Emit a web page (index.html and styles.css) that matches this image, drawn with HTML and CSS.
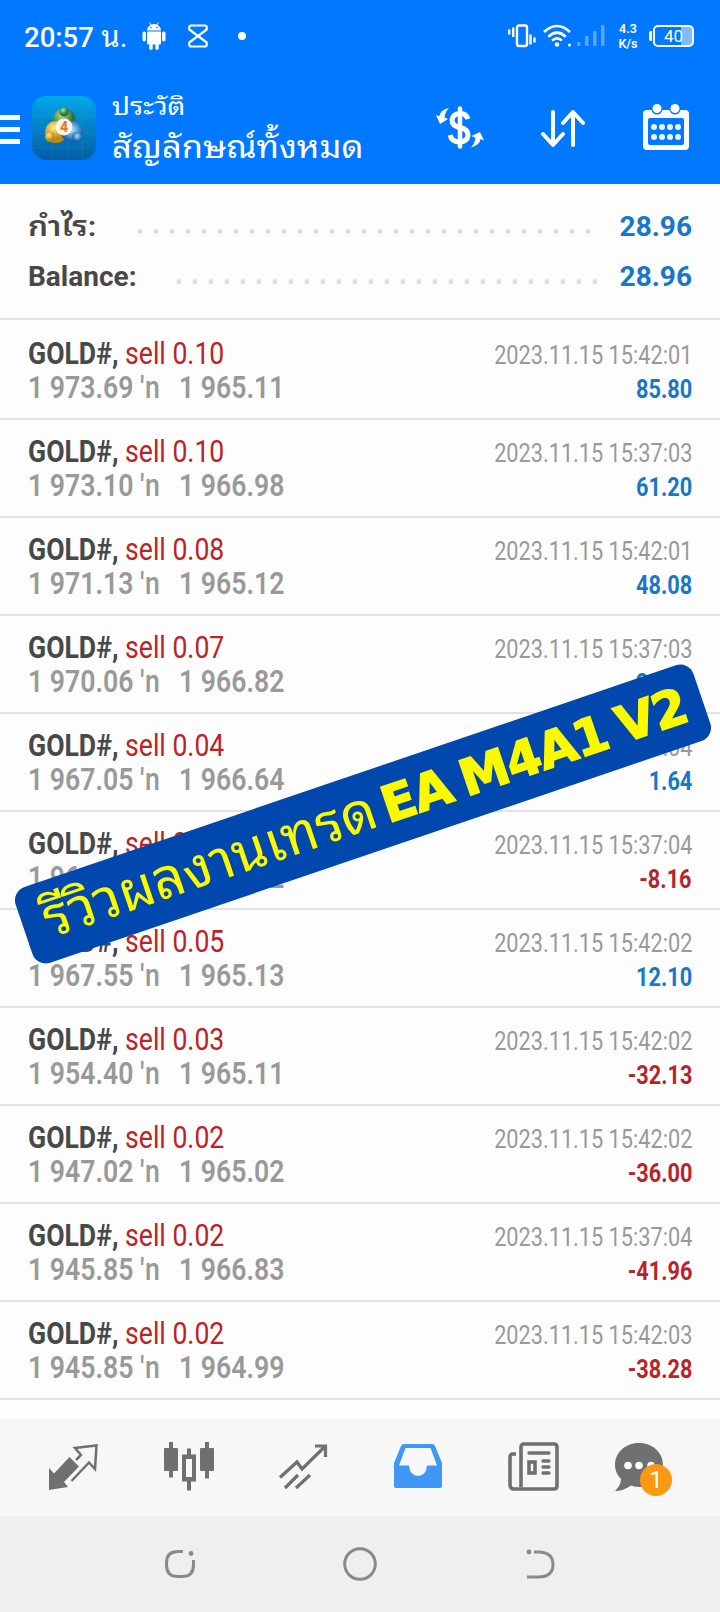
FILE: index.html
```html
<!DOCTYPE html>
<html lang="th">
<head>
    <meta charset="UTF-8">
    <meta name="viewport" content="width=device-width, initial-scale=1.0">
    <title>ประวัติ</title>
    <link rel="stylesheet" href="styles.css">
</head>
<body>

    <header>
        <div class="status-bar">
            <div class="clock">20:57 <span>น.</span></div>
            <svg class="android" width="24" height="28" viewBox="0 0 24 28" fill="#fff">
                <path d="M5 8.500a7 6.500 0 0 1 14 0z"/>
                <path d="M7.500 0.500l2 3M16.500 0.500l-2 3" stroke="#fff"/>
                <circle cx="9" cy="5.500" r=".8" fill="#0078ff"/>
                <circle cx="15" cy="5.500" r=".8" fill="#0078ff"/>
                <path d="M5 9.500h14v11.500a1.500 1.500 0 0 1-1.500 1.500h-11a1.500 1.500 0 0 1-1.500-1.500z"/>
                <rect x="0.500" y="9.500" width="3.400" height="10" rx="1.700"/>
                <rect x="20.100" y="9.500" width="3.400" height="10" rx="1.700"/>
                <rect x="7.300" y="19" width="3.400" height="9" rx="1.700"/>
                <rect x="13.300" y="19" width="3.400" height="9" rx="1.700"/>
            </svg>
            <svg class="hourglass" width="20" height="24" viewBox="0 0 20 24" fill="none" stroke="#fff" stroke-width="2.200" stroke-linejoin="round">
                <path d="M3 1.500h14q1.700 0 1.700 1.700v2.300L10 12L1.300 5.500V3.200q0-1.700 1.700-1.700zM10 12l8.700 6.500v2.300q0 1.700-1.700 1.700H3q-1.700 0-1.700-1.700v-2.300z"/>
            </svg>
            <span class="dot"></span>
            <svg class="vibrate" width="28" height="24" viewBox="0 0 28 24" fill="none" stroke="#fff" stroke-width="2.400">
                <rect x="9" y="1.500" width="10" height="20.500" rx="2"/>
                <path d="M1.200 5.500v5M5.200 3.500v9.500M22.500 10.500v10M26.500 13.500v5"/>
            </svg>
            <svg class="wifi" width="30" height="24" viewBox="0 0 30 24" fill="none" stroke="#fff" stroke-width="2.600">
                <path d="M1 8q13-12 26 0M5.300 12.700q8.700-8 17.400 0M9 16.600q5-4.500 10 0"/>
                <circle cx="14" cy="20.500" r="2.200" fill="#fff" stroke="none"/>
                <circle cx="26.500" cy="21" r="1.500" fill="#fff" stroke="none"/>
            </svg>
            <svg class="signal" width="30" height="22" viewBox="0 0 30 22" fill="#fff" opacity=".35">
                <rect x="1" y="17" width="3.500" height="4" rx="1"/>
                <rect x="9" y="11" width="3.500" height="10" rx="1"/>
                <rect x="17" y="6" width="3.500" height="15" rx="1"/>
                <rect x="25" y="0" width="3.500" height="21" rx="1"/>
            </svg>
            <div class="speed">4.3<br>K/s</div>
            <div class="battery"><span>40</span></div>
        </div>

        <div class="app-bar">
            <div class="menu"><i></i><i></i><i></i></div>
            <svg class="logo" width="64" height="64" viewBox="0 0 64 64">
                <defs>
                    <linearGradient id="sky" x1="0" y1="0" x2="0" y2="1">
                        <stop offset="0" stop-color="#00a9ea"/>
                        <stop offset=".5" stop-color="#0580c4"/>
                        <stop offset="1" stop-color="#035ea5"/>
                    </linearGradient>
                    <radialGradient id="green" cx=".4" cy=".3"><stop offset="0" stop-color="#b7e08d"/><stop offset="1" stop-color="#23743f"/></radialGradient>
                    <radialGradient id="gold" cx=".4" cy=".3"><stop offset="0" stop-color="#fff08a"/><stop offset="1" stop-color="#c18a12"/></radialGradient>
                    <radialGradient id="blue" cx=".5" cy=".4"><stop offset="0" stop-color="#a5ddff"/><stop offset="1" stop-color="#1466ab"/></radialGradient>
                </defs>
                <rect width="64" height="64" rx="14" fill="url(#sky)"/>
                <path d="M20 0v64M36 0v64M50 0v64M0 20h64M0 38h64M0 52h64" stroke="#5cc8ff" stroke-width=".6" opacity=".2"/>
                <circle cx="32" cy="24" r="11.500" fill="url(#green)"/>
                <circle cx="32" cy="16" r="4.500" fill="url(#green)"/>
                <circle cx="24" cy="36" r="11" fill="url(#gold)"/>
                <circle cx="18" cy="41" r="5" fill="url(#gold)"/>
                <circle cx="40" cy="36" r="11" fill="url(#blue)"/>
                <circle cx="45" cy="41" r="5" fill="url(#blue)"/>
                <circle cx="32" cy="31" r="8.500" fill="#fff3e4"/>
                <text x="32" y="36" text-anchor="middle" class="logo-text">4</text>
            </svg>
            <div class="titles">
                <div class="subtitle"><span>ประวัติ</span></div>
                <h1><span>สัญลักษณ์ทั้งหมด</span></h1>
            </div>
            <svg class="currency" width="50" height="44" viewBox="0 0 50 44" fill="none" stroke="#fff">
                <path d="M33 13Q31 7 24.500 7.500T17 14Q17 20 25 21.500T33 29.500Q32 36 24.500 36T15 29" stroke-width="5"/>
                <path d="M25 2.500v38" stroke-width="4.500" stroke-linecap="round"/>
                <path d="M14 2Q5 4 4.500 10L1 9L5 18L13 13L9.500 11.500Q10 6 14 2zM36 41.500Q45 39 45.500 33L49 34.500L45 26L36.500 30L40.500 32Q40 37 36 41.500z" fill="#fff" stroke="none"/>
            </svg>
            <svg class="sort" width="46" height="40" viewBox="0 0 46 40" fill="none" stroke="#fff" stroke-width="4" stroke-linecap="round" stroke-linejoin="round">
                <path d="M13 4v33M3 26l10 11l10-11M33 37V4M23 15L33 4l10 11"/>
            </svg>
            <svg class="calendar" width="46" height="46" viewBox="0 0 46 46" fill="#fff">
                <rect x="0" y="6" width="46" height="40" rx="4"/>
                <rect x="5" y="14" width="36" height="27" rx="2" fill="#0078ff"/>
                <circle cx="14" cy="5" r="5.600" fill="#0078ff"/>
                <circle cx="32" cy="5" r="5.600" fill="#0078ff"/>
                <circle cx="14" cy="4.500" r="4.500"/>
                <circle cx="32" cy="4.500" r="4.500"/>
                <g opacity=".92">
                    <circle cx="11" cy="23" r="3"/><circle cx="19" cy="23" r="3"/><circle cx="27" cy="23" r="3"/><circle cx="35" cy="23" r="3"/>
                    <circle cx="11" cy="33" r="3"/><circle cx="19" cy="33" r="3"/><circle cx="27" cy="33" r="3"/><circle cx="35" cy="33" r="3"/>
                </g>
            </svg>
        </div>
    </header>

    <main>
        <section class="summary">
            <div class="total profit-total"><b>กำไร:</b><i class="leader"></i><strong>28.96</strong></div>
            <div class="total balance-total"><b>Balance:</b><i class="leader"></i><strong>28.96</strong></div>
        </section>
        <div id="deals"></div>
    </main>

    <div class="banner"><span class="banner-thai">รีวิวผลงานเทรด</span><span class="banner-name">EA M4A1 V2</span></div>

    <nav class="tabs">
        <svg width="50" height="50" viewBox="0 0 50 50" fill="none" stroke="#707070" stroke-width="2.500">
            <path d="M0 24l5 5.500L20.500 13l9.500 9.500L15 38l4 5L0 46z" fill="#707070" stroke="none"/>
            <path d="M27 16l5-5l-6-7l21.500-2.500L46 25l-6-6.500L22.500 37"/>
        </svg>
        <svg width="50" height="50" viewBox="0 0 50 50" fill="#707070">
            <rect x="0" y="4" width="14" height="23" rx="1"/><rect x="5" y="-2" width="4" height="35.500"/>
            <rect x="36" y="4" width="14" height="23" rx="1"/><rect x="41" y="-2" width="4" height="36.500"/>
            <path d="M23 4.500h4v6h5v27h-5v9h-4v-9h-5v-27h5zM22 15v18h6V15z" fill-rule="evenodd"/>
        </svg>
        <svg width="50" height="50" viewBox="0 0 50 50" fill="none" stroke="#707070" stroke-width="3.200">
            <path d="M1 33.500L18 18l5 7L46 2.500M36 2h10.500v11M6 44l13-13M17 44l14-13"/>
        </svg>
        <svg width="50" height="50" viewBox="0 0 50 50">
            <path d="M10 0h28q2 0 3 2l7 17v23q0 2-2 2H2q-2 0-2-2V19L7 2q1-2 3-2zM11.500 4L5 21.500H14q1.500 0 1.500 2a8.500 8.500 0 0 0 17 0q0-2 1.500-2h9L36.500 4z" fill="#3f98f5" fill-rule="evenodd"/>
        </svg>
        <svg width="50" height="50" viewBox="0 0 50 50" fill="none" stroke="#707070" stroke-width="3.600">
            <path d="M12 43V3q0-3 3-3h30q3 0 3 3v39q0 3-3 3H5q-4 0-4-4V13q0-3 3-3h3"/>
            <path d="M20 9h20M34 17h6M34 23h6M34 29h6" stroke-linecap="round" stroke-width="3.300"/>
            <rect x="20" y="18" width="6" height="11"/>
        </svg>
        <div class="chat">
            <svg width="50" height="50" viewBox="0 0 50 50">
                <path d="M25-1C39-1 49 9 49 21S39 43 26 43q-5 0-9-1.500Q9 47 1 47q6-6 6-12Q1 29 1 21C1 9 11-1 25-1z" fill="#707070"/>
                <circle cx="14" cy="21.500" r="3.800" fill="#fff"/><circle cx="25" cy="21.500" r="3.800" fill="#fff"/><circle cx="37" cy="21.500" r="3.800" fill="#fff"/>
            </svg>
            <span class="badge">1</span>
        </div>
    </nav>

    <footer>
        <svg width="34" height="34" viewBox="0 0 34 34" fill="none" stroke="#8a8a8a" stroke-width="3">
            <path d="M20 4.500h-5Q3.500 4.500 3.500 16v2Q3.500 29.500 15 29.500h4Q30.500 29.500 30.500 18v-5"/>
            <circle cx="28" cy="6.500" r="2.400" fill="#8a8a8a" stroke="none"/>
        </svg>
        <svg width="34" height="34" viewBox="0 0 34 34" fill="none" stroke="#8a8a8a" stroke-width="3">
            <circle cx="17" cy="17" r="15.300"/>
        </svg>
        <svg width="34" height="34" viewBox="0 0 34 34" fill="none" stroke="#8a8a8a" stroke-width="3">
            <path d="M11 5h4q15 0 15 12.500T15 30H4"/>
            <circle cx="6" cy="5" r="2.400" fill="#8a8a8a" stroke="none"/>
        </svg>
    </footer>

    <script>
        const deals = [
            ['0.10', '1 973.69', '1 965.11', '2023.11.15 15:42:01', '85.80'],
            ['0.10', '1 973.10', '1 966.98', '2023.11.15 15:37:03', '61.20'],
            ['0.08', '1 971.13', '1 965.12', '2023.11.15 15:42:01', '48.08'],
            ['0.07', '1 970.06', '1 966.82', '2023.11.15 15:37:03', '22.68'],
            ['0.04', '1 967.05', '1 966.64', '2023.11.15 15:37:04', '1.64'],
            ['0.04', '1 964.78', '1 966.82', '2023.11.15 15:37:04', '-8.16'],
            ['0.05', '1 967.55', '1 965.13', '2023.11.15 15:42:02', '12.10'],
            ['0.03', '1 954.40', '1 965.11', '2023.11.15 15:42:02', '-32.13'],
            ['0.02', '1 947.02', '1 965.02', '2023.11.15 15:42:02', '-36.00'],
            ['0.02', '1 945.85', '1 966.83', '2023.11.15 15:37:04', '-41.96'],
            ['0.02', '1 945.85', '1 964.99', '2023.11.15 15:42:03', '-38.28']
        ];

        // One row per closed deal
        document.getElementById('deals').innerHTML = deals.map(([lot, open, close, time, profit]) => `
            <div class="deal">
                <div class="line">
                    <span class="symbol"><b>GOLD#,</b> <em>sell ${lot}</em></span>
                    <span class="time">${time}</span>
                </div>
                <div class="line">
                    <span class="prices">${open} <u>′n</u> &nbsp;${close}</span>
                    <span class="profit ${profit[0] === '-' ? 'loss' : ''}">${profit}</span>
                </div>
            </div>`).join('');
    </script>

</body>
</html>
```
FILE: styles.css
```css
* {
    box-sizing: border-box;
}

body {
    position: relative;
    display: flex;
    flex-direction: column;
    width: 720px;
    height: 1612px;
    margin: 0;
    overflow: hidden;
    background-color: #fdfdfd;
    font-family: Roboto, "Noto Sans Thai Looped", Loma, Garuda, "Noto Sans Thai", "Noto Sans", sans-serif;
}

svg {
    display: block;
    flex: none;
    overflow: visible;
}

header {
    flex: none;
    height: 184px;
    background-color: #0078ff;
    border-bottom: 1px solid #1b6fc8;
    color: #ffffff;
}

/* Status bar */
.status-bar {
    display: flex;
    align-items: center;
    height: 72px;
    padding-left: 24px;
}

.clock {
    width: 118px;
    margin-top: 2px;
    font-size: 27.5px;
    font-weight: 500;
    line-height: 32px;
    white-space: nowrap;
}

.clock span {
    margin-left: 1px;
    font-weight: 400;
    font-size: 29px;
}

.hourglass {
    margin-left: 22px;
}

.dot {
    width: 8px;
    height: 8px;
    margin-left: 30px;
    border-radius: 50%;
    background-color: #ffffff;
}

.vibrate {
    margin-left: 262px;
}

.wifi {
    margin-left: 7px;
}

.signal {
    margin-left: 3px;
}

.speed {
    width: 22px;
    margin-left: 11px;
    font-size: 12.5px;
    font-weight: 600;
    line-height: 15px;
    text-align: center;
}

.battery {
    position: relative;
    width: 41px;
    height: 22px;
    margin-left: 14px;
    border: 2px solid #ffffff;
    border-radius: 5px;
    background: linear-gradient(to right, transparent 26px, #7fbcff 26px);
    font-size: 17px;
    line-height: 19px;
    text-align: center;
}

.battery::before {
    content: "";
    position: absolute;
    left: -6px;
    top: 4px;
    width: 3px;
    height: 10px;
    border-radius: 2px 0 0 2px;
    background-color: #ffffff;
}

/* App bar */
.app-bar {
    display: flex;
    height: 111px;
    padding-top: 24px;
}

.menu {
    display: flex;
    flex-direction: column;
    gap: 7px;
    width: 20px;
    margin-top: 19px;
}

.menu i {
    height: 5px;
    background-color: #ffffff;
}

.logo {
    margin-left: 12px;
}

.logo-text {
    font: 700 14px Roboto, sans-serif;
    fill: #e0732d;
}

.titles {
    width: 339px;
    padding-left: 16px;
    white-space: nowrap;
}

.titles span {
    display: inline-block;
    transform: scaleX(1.11);
    transform-origin: left;
}

.subtitle {
    height: 28px;
    font-size: 25px;
    line-height: 22px;
}

h1 {
    margin: 0;
    font-size: 31px;
    font-weight: 400;
    line-height: 48px;
}

.currency {
    margin-top: 10px;
}

.sort {
    margin: 12px 0 0 55px;
}

.calendar {
    margin: 8px 0 0 57px;
}

/* Totals */
main {
    flex: none;
    height: 1235px;
    overflow: hidden;
}

.summary {
    height: 136px;
    padding: 18px 28px 0;
    border-bottom: 2px solid #e2e2e2;
}

.total {
    display: flex;
    justify-content: space-between;
    height: 50px;
    color: #484848;
    font-size: 28px;
    line-height: 50px;
}

.total b {
    font-weight: 700;
}

.profit-total b {
    font-weight: 600;
    transform: scaleX(1.13);
    transform-origin: left;
}

.total strong {
    color: #1777c8;
    font-size: 28px;
}

.leader {
    height: 5px;
    margin-top: 27px;
    background: radial-gradient(circle at 8px 2.5px, #dcdcdc 2px, transparent 2.7px) 0 0 / 16px 5px repeat-x;
}

.profit-total .leader {
    width: 464px;
    margin-left: auto;
    margin-right: 24px;
}

.balance-total .leader {
    width: 432px;
    margin-left: auto;
    margin-right: 17px;
}

/* Deals */
.deal {
    height: 98px;
    padding: 14px 28px 0;
    border-bottom: 2px solid #e2e2e2;
}

.deal:first-child {
    height: 100px;
    padding-top: 16px;
}

.line {
    display: flex;
    justify-content: space-between;
    align-items: baseline;
    height: 34px;
    line-height: 35px;
    white-space: nowrap;
}

.symbol,
.prices {
    font-size: 31px;
    transform: scaleX(0.858);
    transform-origin: left;
}

.symbol b {
    color: #484848;
}

.symbol em {
    color: #bd2226;
    font-style: normal;
}

.prices {
    color: #999999;
    font-weight: 600;
}

.prices u {
    margin-right: 6px;
    font-weight: 500;
    letter-spacing: 1px;
    text-decoration: none;
}

.time,
.profit {
    font-size: 26px;
    transform: scaleX(0.835);
    transform-origin: right;
}

.time {
    color: #999999;
}

.profit {
    color: #1777c8;
    font-weight: 700;
}

.loss {
    color: #b8242a;
}

/* Tilted caption laid over the list */
.banner {
    position: absolute;
    left: 5px;
    top: 774px;
    display: flex;
    align-items: baseline;
    width: 716px;
    height: 80px;
    padding-left: 22px;
    border-radius: 14px;
    background-color: #0048ad;
    color: #fbf900;
    line-height: 78px;
    white-space: nowrap;
    transform: rotate(-18.8deg);
}

.banner-thai {
    width: 357px;
    font-size: 55.5px;
}

.banner-name {
    font-family: "DejaVu Sans", sans-serif;
    font-size: 50px;
    font-weight: 700;
    letter-spacing: -1.2px;
    word-spacing: -4px;
    -webkit-text-stroke: 1.5px #fbf900;
}

/* Bottom tabs */
.tabs {
    display: flex;
    flex: none;
    gap: 65px;
    height: 97px;
    padding: 25px 0 0 49px;
    background-color: #f7f7f7;
}

.chat {
    position: relative;
    margin-left: -10px;
}

.badge {
    position: absolute;
    left: 26px;
    top: 20px;
    width: 32px;
    height: 32px;
    border-radius: 50%;
    background-color: #fb9a12;
    color: #ffffff;
    font-size: 24px;
    line-height: 32px;
    text-align: center;
}

/* System navigation */
footer {
    display: flex;
    flex: 1;
    gap: 146px;
    padding: 31px 0 0 163px;
    background-color: #efefef;
}
```
